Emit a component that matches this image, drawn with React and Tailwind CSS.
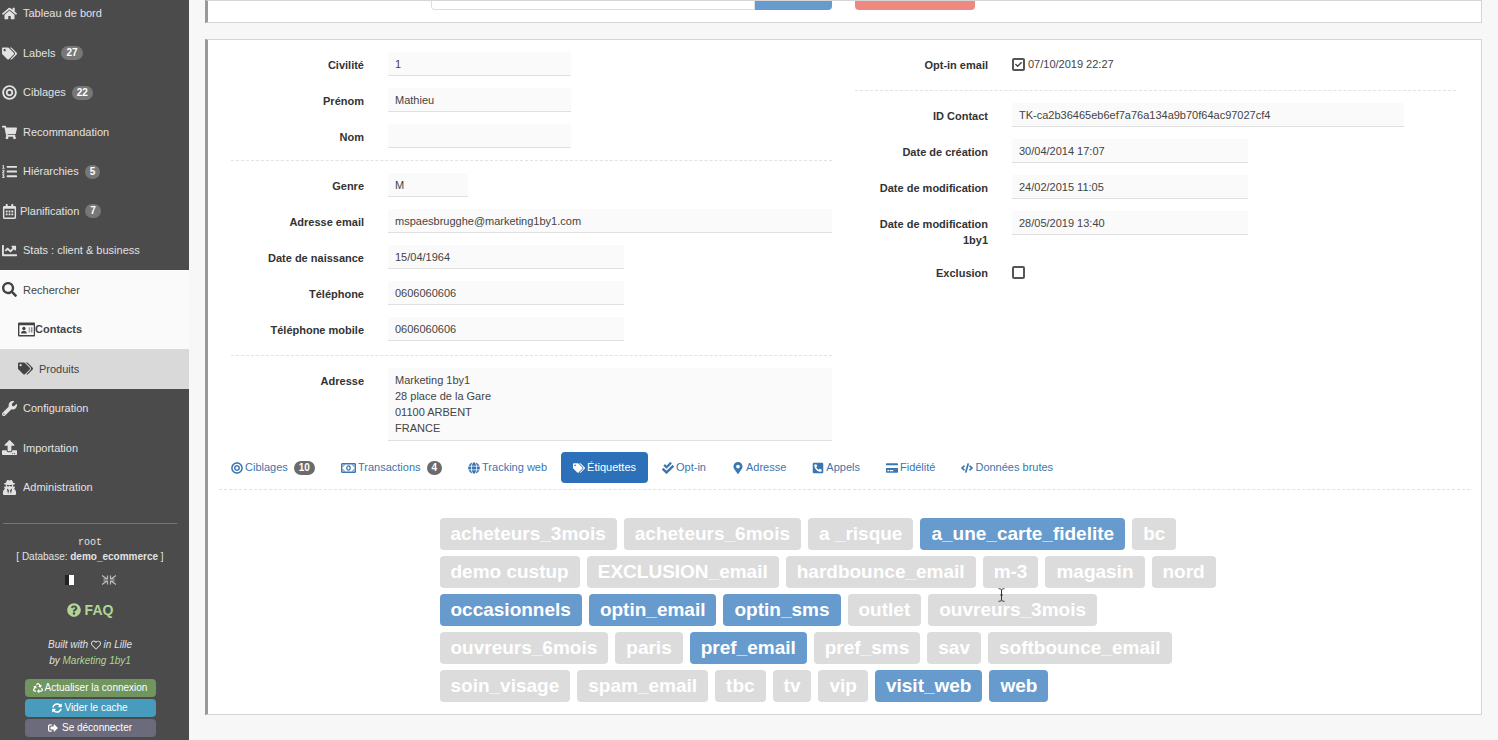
import { useId, useState } from 'react'
import {
  FaHome, FaTags, FaBullseye, FaShoppingCart, FaListOl, FaRegCalendarAlt, FaChartLine, FaSearch,
  FaWrench, FaUpload, FaUserSecret, FaQuestionCircle, FaRegHeart, FaRecycle, FaSyncAlt, FaSignOutAlt,
  FaGlobe, FaCheckDouble, FaMapMarkerAlt, FaPhoneSquareAlt, FaCreditCard, FaCode, FaCheck,
} from 'react-icons/fa'

// Icons missing from the free set
function ContactCard({ className }) {
  return (
    <svg viewBox="0 0 16 14" className={className} fill="currentColor" aria-hidden="true">
      <path fillRule="evenodd" d="M1 .500h14a1 1 0 0 1 1 1v11a1 1 0 0 1-1 1H1a1 1 0 0 1-1-1v-11a1 1 0 0 1 1-1zm.300 2.500v9.200h13.400V3z" />
      <circle cx="5.500" cy="6" r="1.600" />
      <path d="M2.800 10.700c0-1.800 1-2.600 2.700-2.600s2.700.8 2.700 2.600z" />
      <path d="M10 4.800h1v5h-1zM12 4.800h1.500v5H12z" opacity=".6" />
    </svg>
  )
}

function Banknote({ className }) {
  return (
    <svg viewBox="0 0 15 12" className={className} fill="none" stroke="currentColor" aria-hidden="true">
      <rect x=".7" y="1.700" width="13.600" height="8.600" rx=".6" strokeWidth="1.400" />
      <ellipse cx="7.500" cy="6" rx="1.700" ry="2.100" strokeWidth="1.200" />
      <path d="M1.500 4.300c1 0 1.800-.7 1.800-1.800M13.500 4.300c-1 0-1.800-.7-1.800-1.800M1.500 7.700c1 0 1.800.7 1.800 1.800M13.500 7.700c-1 0-1.800.7-1.800 1.800" />
    </svg>
  )
}

const NAV = [
  { label: 'Tableau de bord', icon: FaHome },
  { label: 'Labels', icon: FaTags, count: 27 },
  { label: 'Ciblages', icon: FaBullseye, count: 22 },
  { label: 'Recommandation', icon: FaShoppingCart },
  { label: 'Hiérarchies', icon: FaListOl, count: 5 },
  { label: 'Planification', icon: FaRegCalendarAlt, count: 7, slot: 'w-[18px]' },
  { label: 'Stats : client & business', icon: FaChartLine },
  { label: 'Rechercher', icon: FaSearch, tone: 'open' },
  { label: 'Contacts', icon: ContactCard, tone: 'current', slot: 'w-[17px]' },
  { label: 'Produits', icon: FaTags, tone: 'hover' },
  { label: 'Configuration', icon: FaWrench },
  { label: 'Importation', icon: FaUpload },
  { label: 'Administration', icon: FaUserSecret },
]

const TONES = {
  open: 'bg-[#fafafa] pl-[2px] text-[#444]',
  current: 'bg-[#fafafa] pl-[18px] font-bold text-[#444]',
  hover: 'bg-[#d9d9d9] pl-[18px] text-[#444]',
  dark: 'pl-[2px] text-[#e2e2e2]',
}

const TABS = [
  { label: 'Ciblages', icon: FaBullseye, count: 10 },
  { label: 'Transactions', icon: Banknote, count: 4 },
  { label: 'Tracking web', icon: FaGlobe },
  { label: 'Étiquettes', icon: FaTags },
  { label: 'Opt-in', icon: FaCheckDouble },
  { label: 'Adresse', icon: FaMapMarkerAlt },
  { label: 'Appels', icon: FaPhoneSquareAlt },
  { label: 'Fidélité', icon: FaCreditCard },
  { label: 'Données brutes', icon: FaCode },
]

const TAGS = [
  'acheteurs_3mois', 'acheteurs_6mois', 'a _risque', 'a_une_carte_fidelite', 'bc',
  'demo custup', 'EXCLUSION_email', 'hardbounce_email', 'm-3', 'magasin', 'nord',
  'occasionnels', 'optin_email', 'optin_sms', 'outlet', 'ouvreurs_3mois',
  'ouvreurs_6mois', 'paris', 'pref_email', 'pref_sms', 'sav', 'softbounce_email',
  'soin_visage', 'spam_email', 'tbc', 'tv', 'vip', 'visit_web', 'web',
]

function Sidebar() {
  return (
    <aside className="w-[189px] shrink-0 overflow-hidden bg-[#4b4b4b] text-[#e2e2e2]">
      <nav className="-mt-1.5">
        <ul className="grid h-[513px] auto-rows-fr">
          {NAV.map(({ label, icon: Icon, count, tone = 'dark', slot = 'w-[21px]' }) => (
            <li key={label} className="grid">
              <a href="#" className={`flex items-center ${TONES[tone]}`}>
                <span className={`shrink-0 ${slot}`}>
                  <Icon className="h-[15px] w-auto" />
                </span>
                {label}
                {count && (
                  <span className="ml-1.5 rounded-full bg-[#777] px-[5px] text-[10px] leading-[14px] font-bold text-white">
                    {count}
                  </span>
                )}
              </a>
            </li>
          ))}
        </ul>
      </nav>

      <div className="mr-3 ml-[3px] mt-4 border-t border-[#777] pt-3 text-center text-[10px] leading-[14px]">
        <p className="font-[Liberation_Mono]">root</p>
        <p>[ Database: <b>demo_ecommerce</b> ]</p>
        <div className="mt-[11px] flex items-center justify-center gap-7">
          <button type="button" aria-label="Français" className="flex h-[10px] w-[9px]">
            <span className="flex-1 bg-[#222]" />
            <span className="flex-1 bg-white" />
          </button>
          <button type="button" aria-label="English">
            <svg viewBox="0 0 14 10" className="h-[10px] w-[14px]" stroke="#bbb" strokeWidth="1.200" fill="none">
              <path d="M0 .6 5 4M14 .6 9 4M0 9.400 5 6M14 9.400 9 6M1.500 4h4V.5M12.500 4h-4V.5M1.500 6h4v3.500M12.500 6h-4v3.500" />
            </svg>
          </button>
        </div>
        <a href="#" className="mt-[15px] flex items-center justify-center gap-1 text-[14px] leading-5 font-bold text-[#b0d597]">
          <FaQuestionCircle className="size-[14px]" /> FAQ
        </a>
        <p className="mt-[17px] leading-4 italic">
          Built with <FaRegHeart className="inline size-[10px]" /> in Lille
          <br />
          by <a href="#" className="text-[#b0d597]">Marketing 1by1</a>
        </p>
        <div className="mx-auto mt-[10px] grid w-[131px] gap-0.5 leading-[18px] text-white">
          <button type="button" className="flex items-center justify-center gap-0.5 rounded-sm bg-[#71955f]">
            <FaRecycle className="size-[10px]" /> Actualiser la connexion
          </button>
          <button type="button" className="flex items-center justify-center gap-0.5 rounded-sm bg-[#479bbc]">
            <FaSyncAlt className="size-[10px]" /> Vider le cache
          </button>
          <button type="button" className="flex items-center justify-center gap-1 rounded-sm bg-[#6b6b7b]">
            <FaSignOutAlt className="size-[10px]" /> Se déconnecter
          </button>
        </div>
      </div>
    </aside>
  )
}

const ROW = 'grid grid-cols-[133px_1fr] items-start gap-6'
const LABEL = 'pt-[5px] text-right font-bold leading-4 text-[#333]'

function Field({ label, value, width = 'w-full', rows }) {
  const id = useId()
  const box = `block resize-none border-b border-[#e0e0e0] bg-[#fafafa] px-[7px] text-[#444] outline-none ${width}`
  return (
    <div className={ROW}>
      <label htmlFor={id} className={LABEL}>{label}</label>
      {rows ? (
        <textarea id={id} readOnly rows={rows} defaultValue={value} className={`${box} py-1 leading-4`} />
      ) : (
        <input id={id} readOnly defaultValue={value} className={`${box} h-6`} />
      )}
    </div>
  )
}

function CheckField({ label, text, defaultChecked = false }) {
  const id = useId()
  const [checked, setChecked] = useState(defaultChecked)
  return (
    <div className={ROW}>
      <label htmlFor={id} className={LABEL}>{label}</label>
      <div className="relative flex h-6 items-center gap-[3px] text-[#444]">
        <input
          id={id}
          type="checkbox"
          checked={checked}
          onChange={e => setChecked(e.target.checked)}
          className="size-[13px] appearance-none rounded-xs border-2 border-[#555] bg-white"
        />
        {checked && <FaCheck className="pointer-events-none absolute left-[3px] size-[7px]" />}
        {text}
      </div>
    </div>
  )
}

function Tabs() {
  const [active, setActive] = useState('Étiquettes')
  return (
    <div role="tablist" className="flex gap-0.5 border-b border-dashed border-[#e2e2e2] pb-1.5">
      {TABS.map(({ label, icon: Icon, count }) => (
        <button
          key={label}
          type="button"
          role="tab"
          aria-selected={active === label}
          onClick={() => setActive(label)}
          className={`flex h-[31px] items-center gap-0.5 rounded-sm px-3 ${active === label ? 'bg-[#2b70b8] text-white' : 'text-[#3a76b0]'}`}
        >
          <Icon className="h-3 w-auto" />
          {label}
          {count && (
            <span className="ml-1 rounded-full bg-[#6b6b6b] px-[5px] text-[10px] leading-[14px] font-bold text-white">
              {count}
            </span>
          )}
        </button>
      ))}
    </div>
  )
}

function TagCloud() {
  const [on, setOn] = useState([
    'a_une_carte_fidelite', 'occasionnels', 'optin_email', 'optin_sms', 'pref_email', 'visit_web', 'web',
  ])
  const toggle = tag => setOn(p => (p.includes(tag) ? p.filter(t => t !== tag) : [...p, tag]))

  return (
    <div className="relative mx-auto mt-7 flex w-2/3 flex-wrap gap-x-[7px] gap-y-1.5 px-3">
      {TAGS.map(tag => (
        <button
          key={tag}
          type="button"
          aria-pressed={on.includes(tag)}
          onClick={() => toggle(tag)}
          className={`h-8 rounded-[4px] px-[11px] text-[19px] leading-8 font-bold text-white ${on.includes(tag) ? 'bg-[#679bce]' : 'bg-[#dcdcdc]'}`}
        >
          {tag}
        </button>
      ))}
      {/* Text cursor */}
      <svg viewBox="0 0 7 14" className="absolute top-[70px] left-[570px] h-[14px] w-[7px]" fill="none" stroke="#333" aria-hidden="true">
        <path d="M.5.7c1.500 0 3 .3 3 1.500 0-1.200 1.500-1.500 3-1.500M3.500 2v10M.5 13.300c1.500 0 3-.3 3-1.500 0 1.200 1.500 1.500 3 1.500M2.200 7h2.600" />
      </svg>
    </div>
  )
}

function Divider({ className = 'my-3' }) {
  return <hr className={`border-t border-dashed border-[#e2e2e2] ${className}`} />
}

const PANEL = 'border border-l-[3px] border-[#d6d6d6] border-l-[#999] bg-white'

export default function App() {
  return (
    <div className="flex min-h-screen bg-[#f7f7f7] font-['Liberation_Sans',Arial,sans-serif] text-[11px]">
      <Sidebar />
      <main className="min-w-0 flex-1 px-4">
        {/* Bottom of the search panel, scrolled under the top edge */}
        <section className={`${PANEL} flex items-start pb-3`}>
          <input aria-label="Recherche" className="ml-[223px] h-[9px] w-[324px] rounded-bl-sm border border-t-0 border-[#ddd] outline-none" />
          <button type="button" aria-label="Rechercher" className="h-[9px] w-[77px] rounded-br-sm bg-[#679bce]" />
          <button type="button" aria-label="Supprimer" className="ml-[23px] h-[9px] w-[120px] rounded-b-sm bg-[#ee8880]" />
        </section>

        <section className={`${PANEL} mt-4 pb-3`}>
          <div className="grid grid-cols-2 gap-[23px] pt-3 pr-[25px] pl-[23px]">
            <div>
              <div className="grid gap-3">
                <Field label="Civilité" value="1" width="w-[183px]" />
                <Field label="Prénom" value="Mathieu" width="w-[183px]" />
                <Field label="Nom" value="" width="w-[183px]" />
              </div>
              <Divider />
              <div className="grid gap-3">
                <Field label="Genre" value="M" width="w-20" />
                <Field label="Adresse email" value="mspaesbrugghe@marketing1by1.com" />
                <Field label="Date de naissance" value="15/04/1964" width="w-[236px]" />
                <Field label="Téléphone" value="0606060606" width="w-[236px]" />
                <Field label="Téléphone mobile" value="0606060606" width="w-[236px]" />
              </div>
              <Divider className="mt-[14px] mb-3" />
              <Field label="Adresse" value={'Marketing 1by1\n28 place de la Gare\n01100 ARBENT\nFRANCE'} rows={4} />
            </div>
            <div>
              <CheckField label="Opt-in email" text="07/10/2019 22:27" defaultChecked />
              <Divider className="mt-[14px] mb-3" />
              <div className="grid gap-3">
                <Field label="ID Contact" value="TK-ca2b36465eb6ef7a76a134a9b70f64ac97027cf4" width="w-[392px]" />
                <Field label="Date de création" value="30/04/2014 17:07" width="w-[236px]" />
                <Field label="Date de modification" value="24/02/2015 11:05" width="w-[236px]" />
                <Field label="Date de modification 1by1" value="28/05/2019 13:40" width="w-[236px]" />
                <CheckField label="Exclusion" />
              </div>
            </div>
          </div>

          <div className="mx-[11px] mt-[11px]">
            <Tabs />
            <TagCloud />
          </div>
        </section>
      </main>
    </div>
  )
}
